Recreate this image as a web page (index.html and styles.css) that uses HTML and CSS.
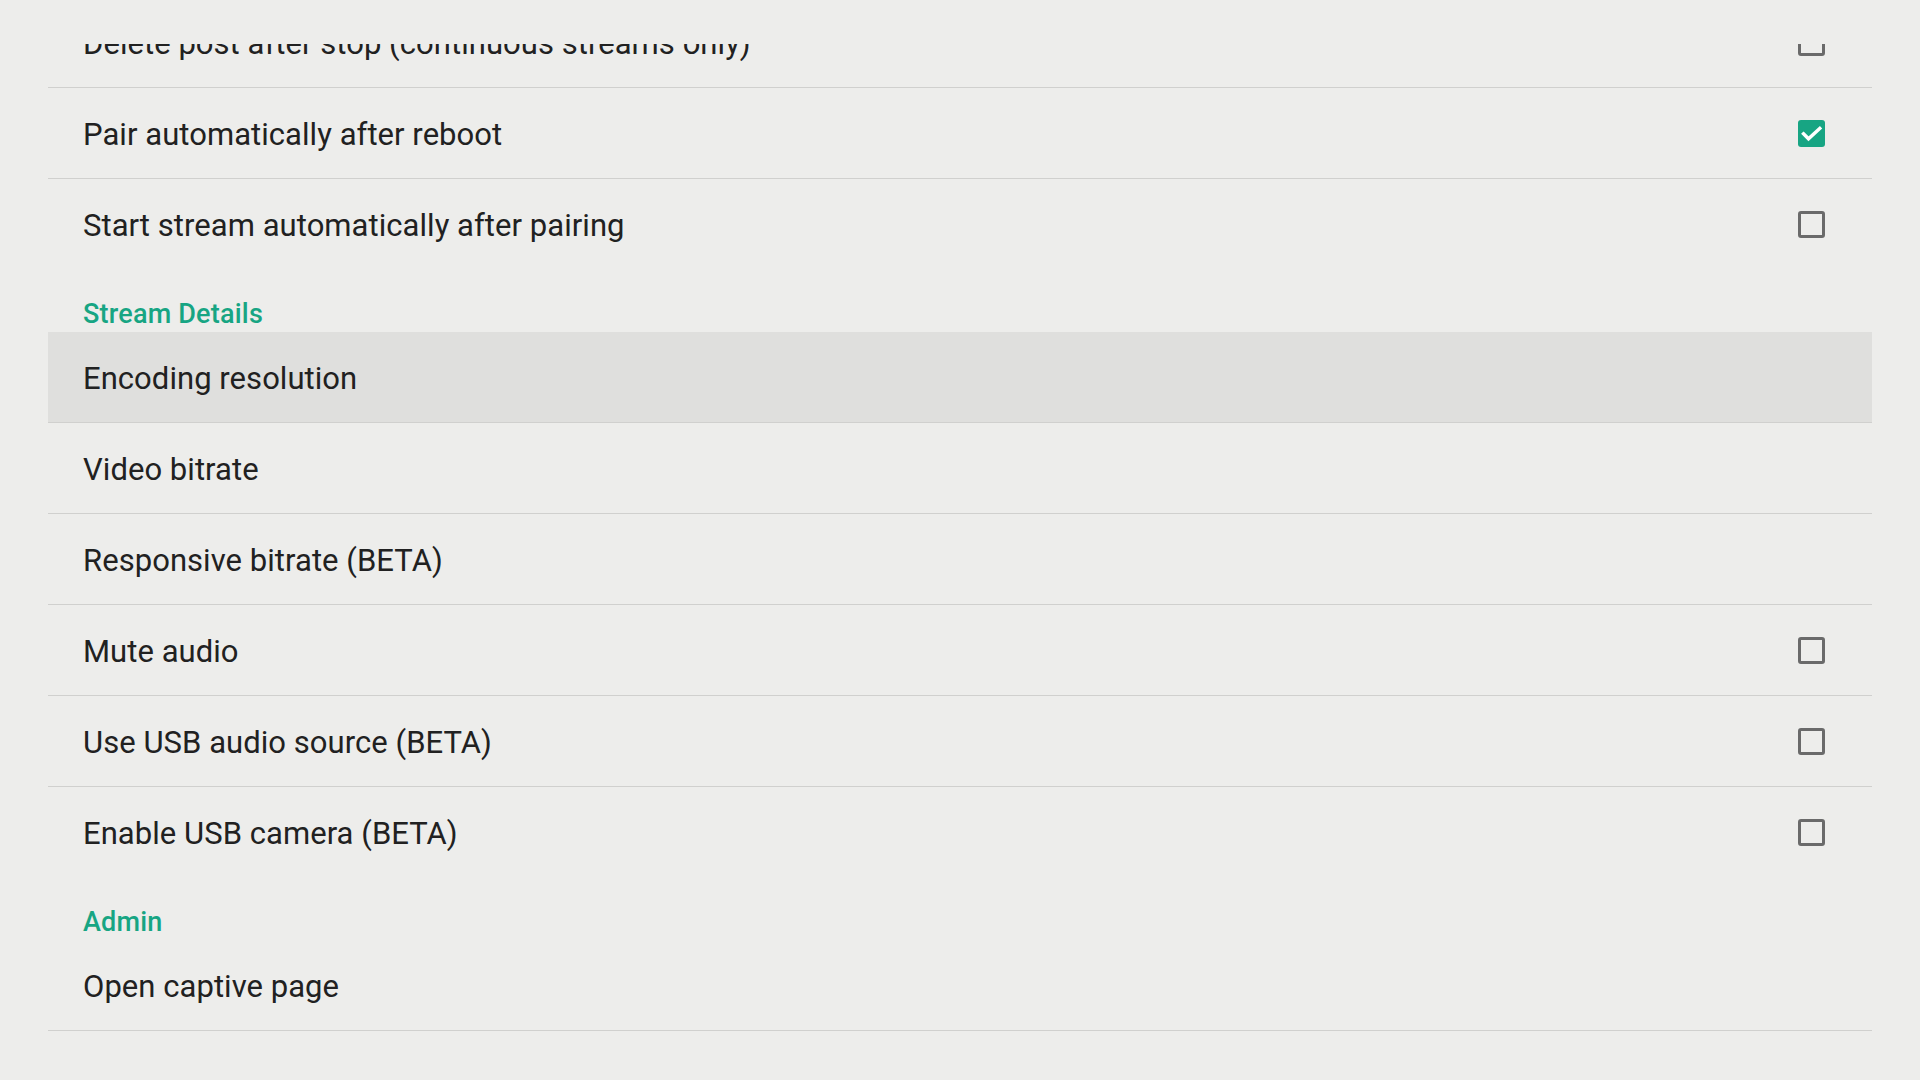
FILE: index.html
```html
<!doctype html>
<html lang="en">
<head>
  <meta charset="utf-8">
  <title>Settings</title>
  <meta name="viewport" content="width=device-width, initial-scale=1">
  <link rel="stylesheet" href="styles.css">
</head>
<body>
  <main class="pane">
    <ul class="prefs">
      <li class="pref">
        <span class="pref-title">Delete post after stop (continuous streams only)</span>
        <span class="check"></span>
      </li>
      <li class="pref">
        <span class="pref-title">Pair automatically after reboot</span>
        <span class="check on">
          <svg viewBox="0 0 27 27" width="27" height="27"><path d="M5.5 13.8l5 5L21.8 8.5" fill="none" stroke="#fff" stroke-width="3.4" stroke-linecap="square"/></svg>
        </span>
      </li>
      <li class="pref last">
        <span class="pref-title">Start stream automatically after pairing</span>
        <span class="check"></span>
      </li>

      <li class="category">Stream Details</li>
      <li class="pref focused">
        <span class="pref-title">Encoding resolution</span>
      </li>
      <li class="pref">
        <span class="pref-title">Video bitrate</span>
      </li>
      <li class="pref">
        <span class="pref-title">Responsive bitrate (BETA)</span>
      </li>
      <li class="pref">
        <span class="pref-title">Mute audio</span>
        <span class="check"></span>
      </li>
      <li class="pref">
        <span class="pref-title">Use USB audio source (BETA)</span>
        <span class="check"></span>
      </li>
      <li class="pref last">
        <span class="pref-title">Enable USB camera (BETA)</span>
        <span class="check"></span>
      </li>

      <li class="category">Admin</li>
      <li class="pref">
        <span class="pref-title">Open captive page</span>
      </li>
    </ul>
  </main>
</body>
</html>
```

FILE: styles.css
```css
:root{
  --bg:#ededeb; --fg:#212121; --accent:#17a583;
  --divider:#d0d0ce; --focus:#dfdfdd; --box:#6a6a6a;
}
html,body{margin:0;padding:0;background:var(--bg);color:var(--fg)}
body{font-family:Roboto,"Noto Sans",sans-serif}

/* list is scrolled: first row sits partly under the top edge */
.pane{margin:44px 48px 0;height:1036px;overflow:hidden}
.prefs{list-style:none;margin:-47px 0 0;padding:0}

.pref{
  display:flex;align-items:center;justify-content:space-between;
  height:90px;padding:0 47px 0 35px;border-bottom:1px solid var(--divider)
}
.pref.last{border-bottom:0}
.pref.focused{background:var(--focus)}
.pref-title{font-size:31px;padding-top:2px;letter-spacing:.05px}

.category{
  height:63px;box-sizing:border-box;padding:29px 0 0 35px;
  color:var(--accent);font-size:27px;font-weight:500;letter-spacing:.2px
}

.check{
  width:27px;height:27px;box-sizing:border-box;flex:none;
  border:3px solid var(--box);border-radius:3px;
  display:flex;align-items:center;justify-content:center
}
.check.on{background:var(--accent);border:0}
```
